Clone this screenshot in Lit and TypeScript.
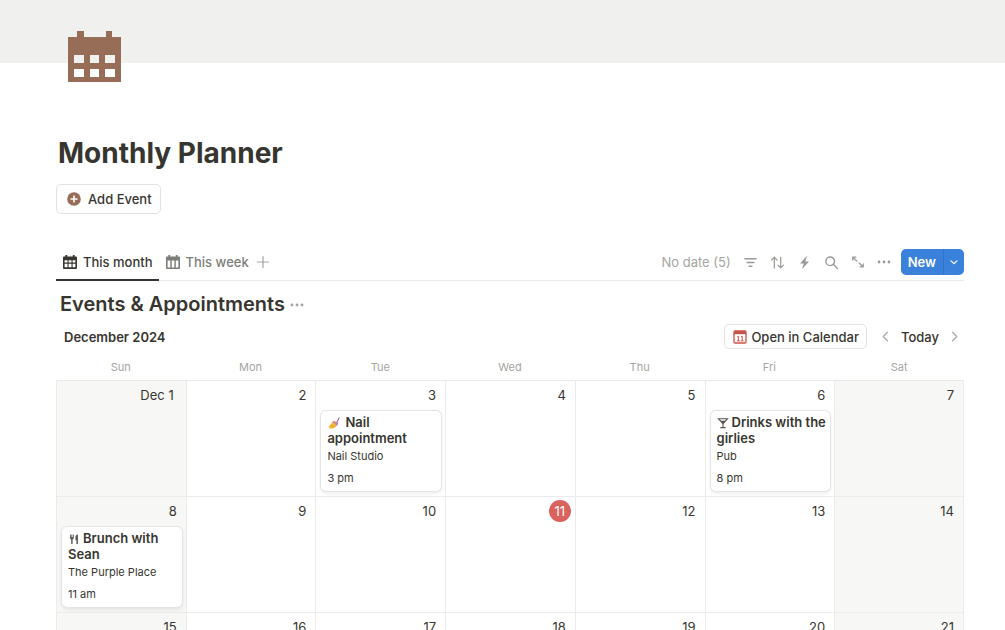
import { LitElement, html, css, nothing } from "lit";
import { customElement, property, state } from "lit/decorators.js";
import { classMap } from "lit/directives/class-map.js";

interface PlannerEvent {
  icon: string;
  title: string;
  place: string;
  time: string;
}

const WEEKDAYS = ["Sun", "Mon", "Tue", "Wed", "Thu", "Fri", "Sat"];

const EVENTS: Record<number, PlannerEvent> = {
  3: { icon: "nails", title: "Nail appointment", place: "Nail Studio", time: "3 pm" },
  6: { icon: "cocktail", title: "Drinks with the girlies", place: "Pub", time: "8 pm" },
  8: { icon: "cutlery", title: "Brunch with Sean", place: "The Purple Place", time: "11 am" },
};

const line = (d: string, size: number, width = 1.3) => html`<svg
  width=${size} height=${size} viewBox="0 0 16 16" fill="none" stroke="currentColor"
  stroke-width=${width} stroke-linecap="round" stroke-linejoin="round" aria-hidden="true"
><path d=${d}></path></svg>`;

const solid = (d: string, size: number) => html`<svg
  width=${size} height=${size} viewBox="0 0 16 16" fill="currentColor" fill-rule="evenodd" aria-hidden="true"
><path d=${d}></path></svg>`;

const ICONS: Record<string, () => unknown> = {
  month: () => solid("M3.4 1h1.8v1.6h5.600V1h1.8v1.6H14q1 0 1 1V14q0 1-1 1H2q-1 0-1-1V3.600q0-1 1-1h1.400zM2.600 6.200v2.200h2.900V6.200zm4 0v2.200h2.900V6.200zm4 0v2.200h2.800V6.200zM2.600 9.800v3.400h2.900V9.800zm4 0v3.400h2.900V9.800zm4 0v3.400h2.800V9.800z", 16),
  week: () => solid("M3.4 1h1.8v1.6h5.600V1h1.8v1.6H14q1 0 1 1V14q0 1-1 1H2q-1 0-1-1V3.600q0-1 1-1h1.400zM2.600 6.600v6.800h2.700V6.600zm4.100 0v6.800h2.700V6.600zm4.100 0v6.800h2.600V6.600z", 16),
  plus: () => line("M8 2.5v11M2.5 8h11", 16, 1.2),
  filter: () => line("M2 4h12M4.3 8h7.4M6.5 12h3", 15, 1.4),
  sort: () => line("M4.6 13.8V2.4M1.6 5.4l3-3 3 3M11.4 2.4v11.4M8.4 10.8l3 3 3-3", 15, 1.3),
  bolt: () => solid("M10.6.8 3.2 9.1h4L5.4 15.2l7.4-8.4H8.9z", 15),
  search: () => line("M11.2 6.7a4.6 4.6 0 1 1-9.2 0 4.6 4.6 0 0 1 9.2 0zM10.2 10.2l4.2 4.2", 15, 1.5),
  expand: () => line("M2 6V2.5h3.6M2.3 2.8l4.4 4.1M14 10v3.5h-3.6M13.7 13.2 9.3 9.1", 14, 1.4),
  dots: () => solid("M.7 8a1.6 1.6 0 1 1 3.2 0 1.6 1.6 0 0 1-3.2 0zm5.7 0a1.6 1.6 0 1 1 3.2 0 1.6 1.6 0 0 1-3.2 0zm5.7 0a1.6 1.6 0 1 1 3.2 0 1.6 1.6 0 0 1-3.2 0z", 14),
  down: () => line("M3.2 6.2 8 10.6l4.8-4.4", 10, 2),
  left: () => line("M10.6 2.6 5.2 8l5.4 5.4", 13, 1.5),
  right: () => line("M5.4 2.6 10.8 8l-5.4 5.4", 13, 1.5),
  add: () => html`<svg width="14" height="14" viewBox="0 0 14 14" aria-hidden="true">
    <circle cx="7" cy="7" r="6.8" fill="#976d57"></circle>
    <path d="M7 3.5v7M3.5 7h7" stroke="#fff" stroke-width="1.6"></path>
  </svg>`,
  calendarApp: () => html`<svg width="14" height="14" viewBox="0 0 14 14" aria-hidden="true">
    <rect x="1" y="1" width="12" height="12" rx="1.2" fill="#fff" stroke="#cf5148" stroke-width="1.3"></rect>
    <path d="M1 1h12v3.200H1z" fill="#c4554d"></path>
    <path d="M4.200 6.900l1.200-.6v4.600M4 10.900h2.800M8 6.900l1.200-.6v4.600M7.800 10.900h2.800" fill="none" stroke="#cf5148" stroke-width="1"></path>
  </svg>`,
  nails: () => html`<svg class="emoji" width="12" height="12" viewBox="0 0 16 16" aria-hidden="true">
    <path d="M1 12.600 5.400 7.600c1.400-1.400 3-1.600 4.600-.8l2.200 3-1.800 3.400-4.600 2.200H2z" fill="#f6bd3c"></path>
    <path d="M3 12.800l4-2.800M5.400 14.200l3.800-2.600" stroke="#cf8a26" stroke-width=".9"></path>
    <path d="M5 7.600 7.800 5l2.600 1.400-1.800 2.400z" fill="#e08a6c"></path>
    <path d="M9.600 6.400l3 .2 1 3.200-2 2.200-2.400-3z" fill="#b784c9"></path>
    <path d="M12 6.600 14.800 1.400" stroke="#9a5fb5" stroke-width="1.500" stroke-linecap="round"></path>
  </svg>`,
  cocktail: () => html`<svg width="12" height="12" viewBox="0 0 16 16" fill="none" stroke="#55534e" stroke-width="1.500" aria-hidden="true">
    <path d="M2 2.400h12L8 9zM8 9v5M4.400 14.200h7.200"></path>
    <path d="M4.400 5h7.200L8 9z" fill="#55534e" stroke="none"></path>
  </svg>`,
  cutlery: () => html`<svg width="12" height="12" viewBox="0 0 16 16" fill="#55534e" aria-hidden="true">
    <path d="M2.600 2h1.100v3.800h.9V2h1.100v3.800h.9V2h1.100v4.200c0 1.200-.6 1.900-1.600 2.300v6.100H4.300V8.500C3.200 8.100 2.600 7.400 2.600 6.200zM13.200 2v12.600h-1.900V9.600H10V5.400C10 3.500 11.200 2 13.200 2z"></path>
  </svg>`,
};

@customElement("event-card")
export class EventCard extends LitElement {
  @property({ attribute: false }) event!: PlannerEvent;

  static styles = css`
    :host { display: block; }
    .card {
      display: block;
      padding: 3px 3px 5px 6px;
      border-radius: 5px;
      background: #fff;
      box-shadow: 0 0 0 1px #e4e4e2, 0 2px 4px rgba(15, 15, 15, 0.1);
      color: #37352f;
      font-size: 11px;
      line-height: 16px;
      text-decoration: none;
    }
    .title { margin: 0; font-size: 13px; font-weight: 600; line-height: 16px; }
    .title svg { vertical-align: -2px; margin: 0 3px 0 0; }
    .title svg.emoji { margin: 0 5px 0 1px; }
    .meta { margin: 2px 0 6px; }
    .time { margin: 0; }
  `;

  render() {
    const e = this.event;
    return html`<a class="card" href="#event">
      <h3 class="title">${ICONS[e.icon]()}${e.title}</h3>
      <p class="meta">${e.place}</p>
      <p class="time">${e.time}</p>
    </a>`;
  }
}

@customElement("app-root")
export class AppRoot extends LitElement {
  @state() private view = "month";

  private today = 11;

  static styles = css`
    :host {
      display: block;
      height: 100vh;
      overflow: auto;
      scrollbar-width: none;
      background: #fff;
      color: #37352f;
      font-family: Inter, "Liberation Sans", sans-serif;
      font-size: 13px;
    }
    * { box-sizing: border-box; }
    svg { display: block; flex: none; }
    button {
      display: flex;
      align-items: center;
      margin: 0;
      padding: 0;
      border: 0;
      background: none;
      color: inherit;
      font: inherit;
      cursor: pointer;
    }
    .cover { height: 63px; background: #f0f0ee; }
    .page { padding: 0 41px 0 56px; }
    .emblem { margin: -36px 0 0 8px; }
    .title { margin: 48px 0 0 2px; font-size: 28px; font-weight: 700; line-height: 36px; }
    .outlined { border: 1px solid #e3e2e0; border-radius: 5px; font-weight: 500; }
    .add { gap: 7px; height: 30px; margin-top: 13px; padding: 0 8px 0 10px; }
    .bar {
      display: flex;
      align-items: center;
      justify-content: space-between;
      height: 37px;
      margin-top: 30px;
      border-bottom: 1px solid #e9e9e7;
    }
    .tabs, .tools { display: flex; align-items: center; }
    .tabs { align-self: stretch; }
    .tab {
      height: 37px;
      gap: 5px;
      padding: 0 6px;
      border: solid transparent;
      border-width: 2px 0;
      color: #7d7c78;
      font-weight: 500;
    }
    .tab.active { border-bottom-color: #37352f; color: #37352f; }
    .muted { color: #a5a4a0; }
    .tools { gap: 12px; color: #9b9a97; }
    .undated { color: #a5a4a0; }
    .split {
      display: flex;
      overflow: hidden;
      height: 26px;
      margin-left: -2px;
      border-radius: 5px;
      background: #3a81dc;
      color: #fff;
      font-weight: 600;
    }
    .new { padding: 0 7px; }
    .more { padding: 0 5px; border-left: 1px solid #3372c4; }
    .heading { display: flex; align-items: center; gap: 5px; margin: 10px 0 0 4px; }
    .heading h2 { margin: 0; font-size: 20px; font-weight: 600; line-height: 27px; }
    .monthbar { display: flex; align-items: center; justify-content: space-between; margin: 6px 3px 0 8px; }
    .month { margin: 0; font-size: 13px; font-weight: 600; }
    .nav { display: flex; align-items: center; gap: 9px; font-weight: 500; }
    .open { gap: 4px; height: 25px; margin-right: 3px; padding: 0 7px 0 8px; }
    .calendar { width: 100%; border-collapse: separate; border-spacing: 0; table-layout: fixed; }
    .calendar th {
      height: 32px;
      padding: 5px 0 0;
      color: #a5a4a0;
      font-size: 11px;
      font-weight: 400;
      border-bottom: 1px solid #e9e9e7;
    }
    .day {
      height: 116px;
      padding: 3px 4px 5px 5px;
      border-left: 1px solid #ebebe9;
      border-bottom: 1px solid #ebebe9;
      vertical-align: top;
    }
    .day:last-child { border-right: 1px solid #ebebe9; }
    .weekend { background: #f7f7f5; }
    .date {
      display: block;
      width: fit-content;
      margin: 0 0 5px auto;
      padding: 0 5px;
      border-radius: 11px;
      line-height: 22px;
    }
    .named { padding: 0 8px; }
    .today { width: 22px; padding: 0; background: #db615c; color: #fff; text-align: center; }
  `;

  private tab(id: string, label: string) {
    return html`<button
      class=${classMap({ tab: true, active: this.view === id })}
      role="tab"
      aria-selected=${this.view === id}
      @click=${() => (this.view = id)}
    >${ICONS[id]()}${label}</button>`;
  }

  private tool(icon: string, label: string) {
    return html`<button aria-label=${label}>${ICONS[icon]()}</button>`;
  }

  private day(n: number) {
    const weekend = n % 7 <= 1;
    const date = { date: true, named: n === 1, today: n === this.today };
    return html`<td class=${classMap({ day: true, weekend })}>
      <time class=${classMap(date)}>${n === 1 ? "Dec 1" : n}</time>
      ${EVENTS[n] ? html`<event-card .event=${EVENTS[n]}></event-card>` : nothing}
    </td>`;
  }

  render() {
    return html`
      <div class="cover"></div>
      <main class="page">
        <svg class="emblem" width="60" height="60" viewBox="0 0 60 60" aria-hidden="true">
          <path fill="#976d57" fill-rule="evenodd" d="M13 4h7v6h22V4h6v6h9v45H4V10h9zM10 28v8h10v-8zm16 0v8h9v-8zm15 0v8h10v-8zM10 42v8h10v-8zm16 0v8h9v-8zm15 0v8h10v-8z"></path>
        </svg>
        <h1 class="title">Monthly Planner</h1>
        <button class="outlined add">${ICONS.add()}Add Event</button>

        <div class="bar">
          <div class="tabs" role="tablist">
            ${this.tab("month", "This month")}${this.tab("week", "This week")}
            <button class="muted" aria-label="Add view">${ICONS.plus()}</button>
          </div>
          <div class="tools">
            <button class="undated">No date (5)</button>
            ${this.tool("filter", "Filter")}${this.tool("sort", "Sort")}${this.tool("bolt", "Automations")}
            ${this.tool("search", "Search")}${this.tool("expand", "Open full page")}${this.tool("dots", "More")}
            <div class="split">
              <button class="new">New</button>
              <button class="more" aria-label="New from template">${ICONS.down()}</button>
            </div>
          </div>
        </div>

        <div class="heading">
          <h2>Events &amp; Appointments</h2>
          <button class="muted" aria-label="Database options">${ICONS.dots()}</button>
        </div>

        <div class="monthbar">
          <h3 class="month">December 2024</h3>
          <div class="nav">
            <button class="outlined open">${ICONS.calendarApp()}Open in Calendar</button>
            <button class="muted" aria-label="Previous month">${ICONS.left()}</button>
            <button>Today</button>
            <button class="muted" aria-label="Next month">${ICONS.right()}</button>
          </div>
        </div>

        <table class="calendar">
          <thead>
            <tr>${WEEKDAYS.map((d) => html`<th scope="col">${d}</th>`)}</tr>
          </thead>
          <tbody>
            ${[0, 1, 2].map((w) => html`<tr>${WEEKDAYS.map((_, i) => this.day(w * 7 + i + 1))}</tr>`)}
          </tbody>
        </table>
      </main>
    `;
  }
}
